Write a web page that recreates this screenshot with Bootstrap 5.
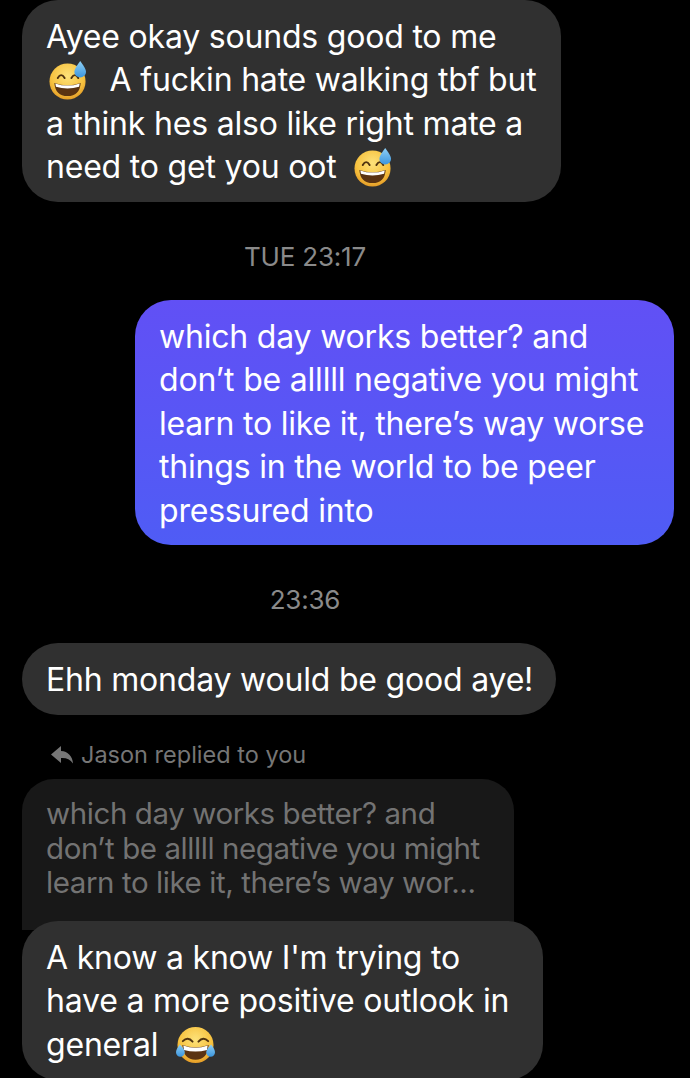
<!DOCTYPE html>
<html lang="en">
<head>
  <meta charset="UTF-8" />
  <meta name="viewport" content="width=device-width, initial-scale=1.0"/>
  <title>Messages</title>
  <link href="https://cdn.jsdelivr.net/npm/bootstrap@5.3.0/dist/css/bootstrap.min.css" rel="stylesheet">
  <style>
    html, body { background: #000; }
    body {
      width: 690px;
      height: 1078px;
      overflow: hidden;
      font-family: Inter, "Liberation Sans", sans-serif;
      color: #fff;
    }
    .thread { padding: 0 16px 0 22px; }
    .msg {
      padding: 15px 0 13.4px 24px;
      font-size: 32px;
      line-height: 43.4px;
      letter-spacing: -0.2px;
      white-space: nowrap;
      border-radius: 36px;
      background: #303030;
      position: relative;
    }
    .msg-first { width: 539px; }
    .msg-mine {
      width: 539px;
      background: linear-gradient(180deg, #6150f5 0%, #4f5cf5 100%);
      margin-left: 113px;
    }
    .msg-short { width: 534px; }
    .msg-over { width: 521px; margin-top: -9px; }
    .msg-quoted {
      width: 492px;
      background: #181818;
      color: #737373;
      font-size: 29.5px;
      line-height: 34.6px;
      letter-spacing: -0.42px;
      padding: 17px 0 30px 24px;
      border-radius: 32px 32px 0 0;
    }
    .stamp {
      width: 566px;
      margin: 40px 0 28px;
      text-align: center;
      color: #8a8a8a;
      font-size: 26px;
      line-height: 30px;
      letter-spacing: -0.2px;
    }
    .reply-label {
      margin: 26px 0 10px;
      color: #767676;
      font-size: 23.5px;
      line-height: 28px;
      padding-left: 28px;
    }
    .emo { width: 39px; height: 39px; vertical-align: -9px; }
    .emo-lead { margin-left: 3px; margin-right: 4px; }
  </style>
</head>
<body>
  <svg width="0" height="0" class="position-absolute">
    <defs>
      <radialGradient id="faceFill" cx="50%" cy="35%" r="70%">
        <stop offset="0%" stop-color="#fde27a"/>
        <stop offset="65%" stop-color="#f7c23f"/>
        <stop offset="100%" stop-color="#df9220"/>
      </radialGradient>
      <linearGradient id="dropFill" x1="0" y1="0" x2="0" y2="1">
        <stop offset="0%" stop-color="#8fd0f5"/>
        <stop offset="100%" stop-color="#3b95dd"/>
      </linearGradient>
      <symbol id="sweat" viewBox="0 0 40 40">
        <circle cx="19" cy="21" r="18.500" fill="url(#faceFill)"/>
        <path d="M9 17.500q3.500-6 7 0M23 17.500q3.500-6 7 0" fill="none" stroke="#50330f" stroke-width="2" stroke-linecap="round"/>
        <path d="M5.500 22.500q13.500 5 27 0q-1 13.500-13.500 13.500t-13.500-13.500z" fill="#5a3312"/>
        <path d="M6.500 23q12.500 4.500 25 0l-.6 3.500q-12 3.500-23.800 0z" fill="#fff"/>
        <path d="M32 0q-6 8-6 11a6 6 0 0 0 12 0q0-3-6-11z" fill="url(#dropFill)"/>
      </symbol>
      <symbol id="joy" viewBox="0 0 40 40">
        <circle cx="20" cy="19.500" r="18.500" fill="url(#faceFill)"/>
        <path d="M7 15.500q5-5 10 .5M23 16q5-5.500 10-.5" fill="none" stroke="#50330f" stroke-width="2" stroke-linecap="round"/>
        <path d="M6.500 19.500q13.500 5 27 0q-1 15-13.500 15t-13.500-15z" fill="#5a3312"/>
        <path d="M7.500 20q12.500 4.500 25 0l-.7 4.500q-11.800 3.500-23.600 0z" fill="#fff"/>
        <path d="M4 19q-4 5-4 8a4.500 4.500 0 0 0 9 0q0-3-5-8zM36 19q-5 5-5 8a4.500 4.500 0 0 0 9 0q0-3-4-8z" fill="url(#dropFill)"/>
      </symbol>
    </defs>
  </svg>

  <main class="thread">
    <div class="msg msg-first">Ayee okay sounds good to me<br><svg class="emo emo-lead"><use href="#sweat"/></svg>&nbsp; A fuckin hate walking tbf but<br>a think hes also like right mate a<br>need to get you oot &nbsp;<svg class="emo"><use href="#sweat"/></svg></div>

    <div class="stamp">TUE 23:17</div>

    <div class="msg msg-mine">which day works better? and<br>don’t be alllll negative you might<br>learn to like it, there’s way worse<br>things in the world to be peer<br>pressured into</div>

    <div class="stamp">23:36</div>

    <div class="msg msg-short">Ehh monday would be good aye!</div>

    <div class="reply-label d-flex align-items-center gap-1">
      <svg width="27" height="20" viewBox="0 0 27 20"><path d="M11 1 1 9.500 11 18v-5c5-.4 9 1 12 5.500C22.500 11 18 6.500 11 6z" fill="#767676"/></svg>
      <span>Jason replied to you</span>
    </div>

    <div class="msg msg-quoted">which day works better? and<br>don’t be alllll negative you might<br>learn to like it, there’s way wor...</div>

    <div class="msg msg-over">A know a know I'm trying to<br>have a more positive outlook in<br>general &nbsp;<svg class="emo"><use href="#joy"/></svg></div>
  </main>
  <script src="https://cdn.jsdelivr.net/npm/bootstrap@5.3.0/dist/js/bootstrap.bundle.min.js"></script>
</body>
</html>
